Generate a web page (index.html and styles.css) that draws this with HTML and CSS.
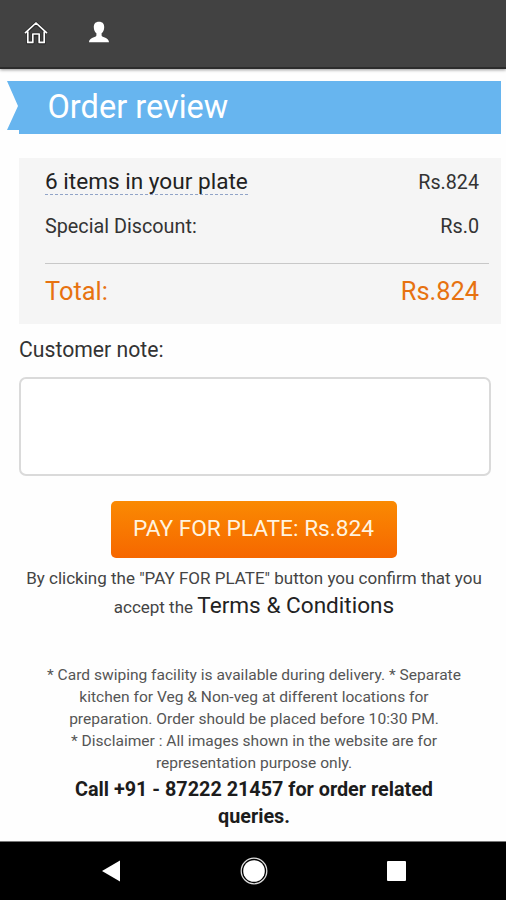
FILE: index.html
```html
<!DOCTYPE html>
<html lang="en">
<head>
<meta charset="utf-8">
<title>Order review</title>
<link rel="stylesheet" href="styles.css">
</head>
<body>
<header class="topbar">
  <svg class="icon-home" width="26" height="24" viewBox="0 0 26 24" aria-label="Home"><path class="home-shadow" d="M2 12.4 13 2.2 24 12.4M4.8 11v10.8h5V13.5h6.4v8.3h5V11"/><path class="home-line" d="M2 12.2 13 2 24 12.2M4.8 10.600v10.800h5V13h6.400v8.400h5V10.600"/></svg>
  <svg class="icon-user" width="22" height="22" viewBox="0 0 22 22" aria-label="Account"><path d="M11 0.700C14.600 .700 16.300 2.800 16.200 6.200C16.100 8.900 15.300 10.900 13.600 12.200V14.400C13.800 16.300 21 16.500 21 21.300H1C1 16.500 8.200 16.300 8.400 14.400V12.200C6.700 10.900 5.900 8.900 5.800 6.200C5.700 2.800 7.400 .700 11 .700Z"/></svg>
</header>
<main class="page">
  <div class="ribbon">
    <svg class="ribbon-tail" width="12" height="49" viewBox="0 0 12 49"><path d="M0 0H12V49H0L11 25Z"/></svg>
    <h1 class="ribbon-title">Order review</h1>
  </div>
  <section class="summary">
    <div class="row row-items"><a class="items-link">6 items in your plate</a><span class="amount">Rs.824</span></div>
    <div class="row row-discount"><span class="label">Special Discount:</span><span class="amount">Rs.0</span></div>
    <div class="row row-total"><span>Total:</span><span>Rs.824</span></div>
  </section>
  <label class="note-label" for="note">Customer note:</label>
  <textarea class="note" id="note"></textarea>
  <button class="pay">PAY FOR PLATE: Rs.824</button>
  <p class="terms"><span class="terms-a">By clicking the "PAY FOR PLATE" button you confirm that you</span><br><span class="terms-b">accept the <a class="terms-link">Terms &amp; Conditions</a></span></p>
  <p class="fine">* Card swiping facility is available during delivery. * Separate<br>kitchen for Veg &amp; Non-veg at different locations for<br><span class="fine-wide">preparation. Order should be placed before 10:30 PM.</span><br>* Disclaimer : All images shown in the website are for<br>representation purpose only.</p>
  <p class="call">Call +91 - 87222 21457 for order related<br>queries.</p>
</main>
<nav class="navbar">
  <svg width="18" height="22" viewBox="0 0 18 22"><path d="M0 11 18 .500V21.500Z"/></svg>
  <svg width="28" height="28" viewBox="0 0 28 28"><circle class="ring" cx="14" cy="14" r="12.800"/><circle cx="14" cy="14" r="10.800"/></svg>
  <svg width="19" height="20" viewBox="0 0 19 20"><rect width="19" height="20" rx="1"/></svg>
</nav>
</body>
</html>
```
FILE: styles.css
```css
* { box-sizing: border-box; }
body {
  margin: 0;
  height: 900px;
  display: flex;
  flex-direction: column;
  overflow: hidden;
  background: #fefefe;
  color: #333;
  font-family: Roboto, "Liberation Sans", sans-serif;
}
h1, p { margin: 0; font-weight: 400; }
.topbar {
  height: 69px;
  flex: none;
  display: flex;
  align-items: flex-start;
  padding: 21px 0 0 23px;
  background: #424242;
  border-bottom: 2px solid #2c2c2c;
  box-shadow: 0 1px 3px rgba(0, 0, 0, .4);
}
.icon-user { margin-left: 39px; fill: #fff; }
.home-shadow, .home-line { fill: none; stroke-width: 1.7; stroke-linejoin: round; }
.home-shadow { stroke: #2a2a2a; stroke-width: 3.5; }
.home-line { stroke: #fff; }
.page { flex: 1; min-height: 0; display: flex; flex-direction: column; }
.ribbon { display: flex; height: 53px; margin: 12px 5px 0 7px; }
.ribbon-tail { fill: #67b5ef; }
.ribbon-title {
  flex: 1;
  padding-left: 28.500px;
  background: #67b5ef;
  color: #fff;
  font-size: 32.500px;
  line-height: 52px;
}
.summary {
  height: 166px;
  margin: 24px 5px 0 19px;
  padding: 0 12px 0 26px;
  background: #f5f5f5;
}
.row { display: flex; justify-content: space-between; padding-right: 10px; }
.row-items { height: 46px; line-height: 50px; align-items: flex-start; font-size: 19.700px; }
.items-link { margin-top: 10px; height: 27px; line-height: 27px; font-size: 22.600px; color: #222; border-bottom: 1px dashed #91a4c8; }
.row-discount { height: 60px; line-height: 46px; font-size: 19.800px; border-bottom: 1px solid #c8c8c8; }
.row-total { line-height: 55px; font-size: 25.400px; color: #e77210; }
.note-label { margin: 13px 0 0 19px; height: 27px; line-height: 26px; font-size: 21.200px; }
.note {
  width: 472px;
  height: 99px;
  margin: 13px 0 0 19px;
  border: 2px solid #dadada;
  border-radius: 7px;
  background: #fff;
  resize: none;
}
.pay {
  align-self: center;
  width: 286px;
  height: 57px;
  margin: 25px 0 0 1px;
  padding: 0 0 1px;
  border: 0;
  border-radius: 5px;
  background: linear-gradient(#fa8a02, #f66700);
  color: #fff3df;
  font: 400 22.700px/54px Roboto, sans-serif;
  white-space: nowrap;
}
.terms { margin: 6px 0 0 2px; text-align: center; line-height: 28px; font-size: 17px; color: #444; white-space: nowrap; }
.terms-link { font-size: 22.600px; color: #222; }
.fine { margin: 42.500px 0 0 2px; text-align: center; font-size: 15.550px; line-height: 22.200px; color: #555; white-space: nowrap; }
.fine-wide { letter-spacing: .02px; }
.call { margin: 1.500px 0 0 2px; text-align: center; font-size: 19.800px; font-weight: 700; line-height: 27px; color: #1c1c1c; white-space: nowrap; }
.navbar {
  height: 59px;
  flex: none;
  display: flex;
  align-items: center;
  justify-content: space-between;
  padding: 0 100px 0 102px;
  background: #000;
  border-top: 1px solid #777;
}
.navbar svg { fill: #fff; }
.navbar .ring { fill: none; stroke: #ddd; stroke-width: 1.300; }
```
